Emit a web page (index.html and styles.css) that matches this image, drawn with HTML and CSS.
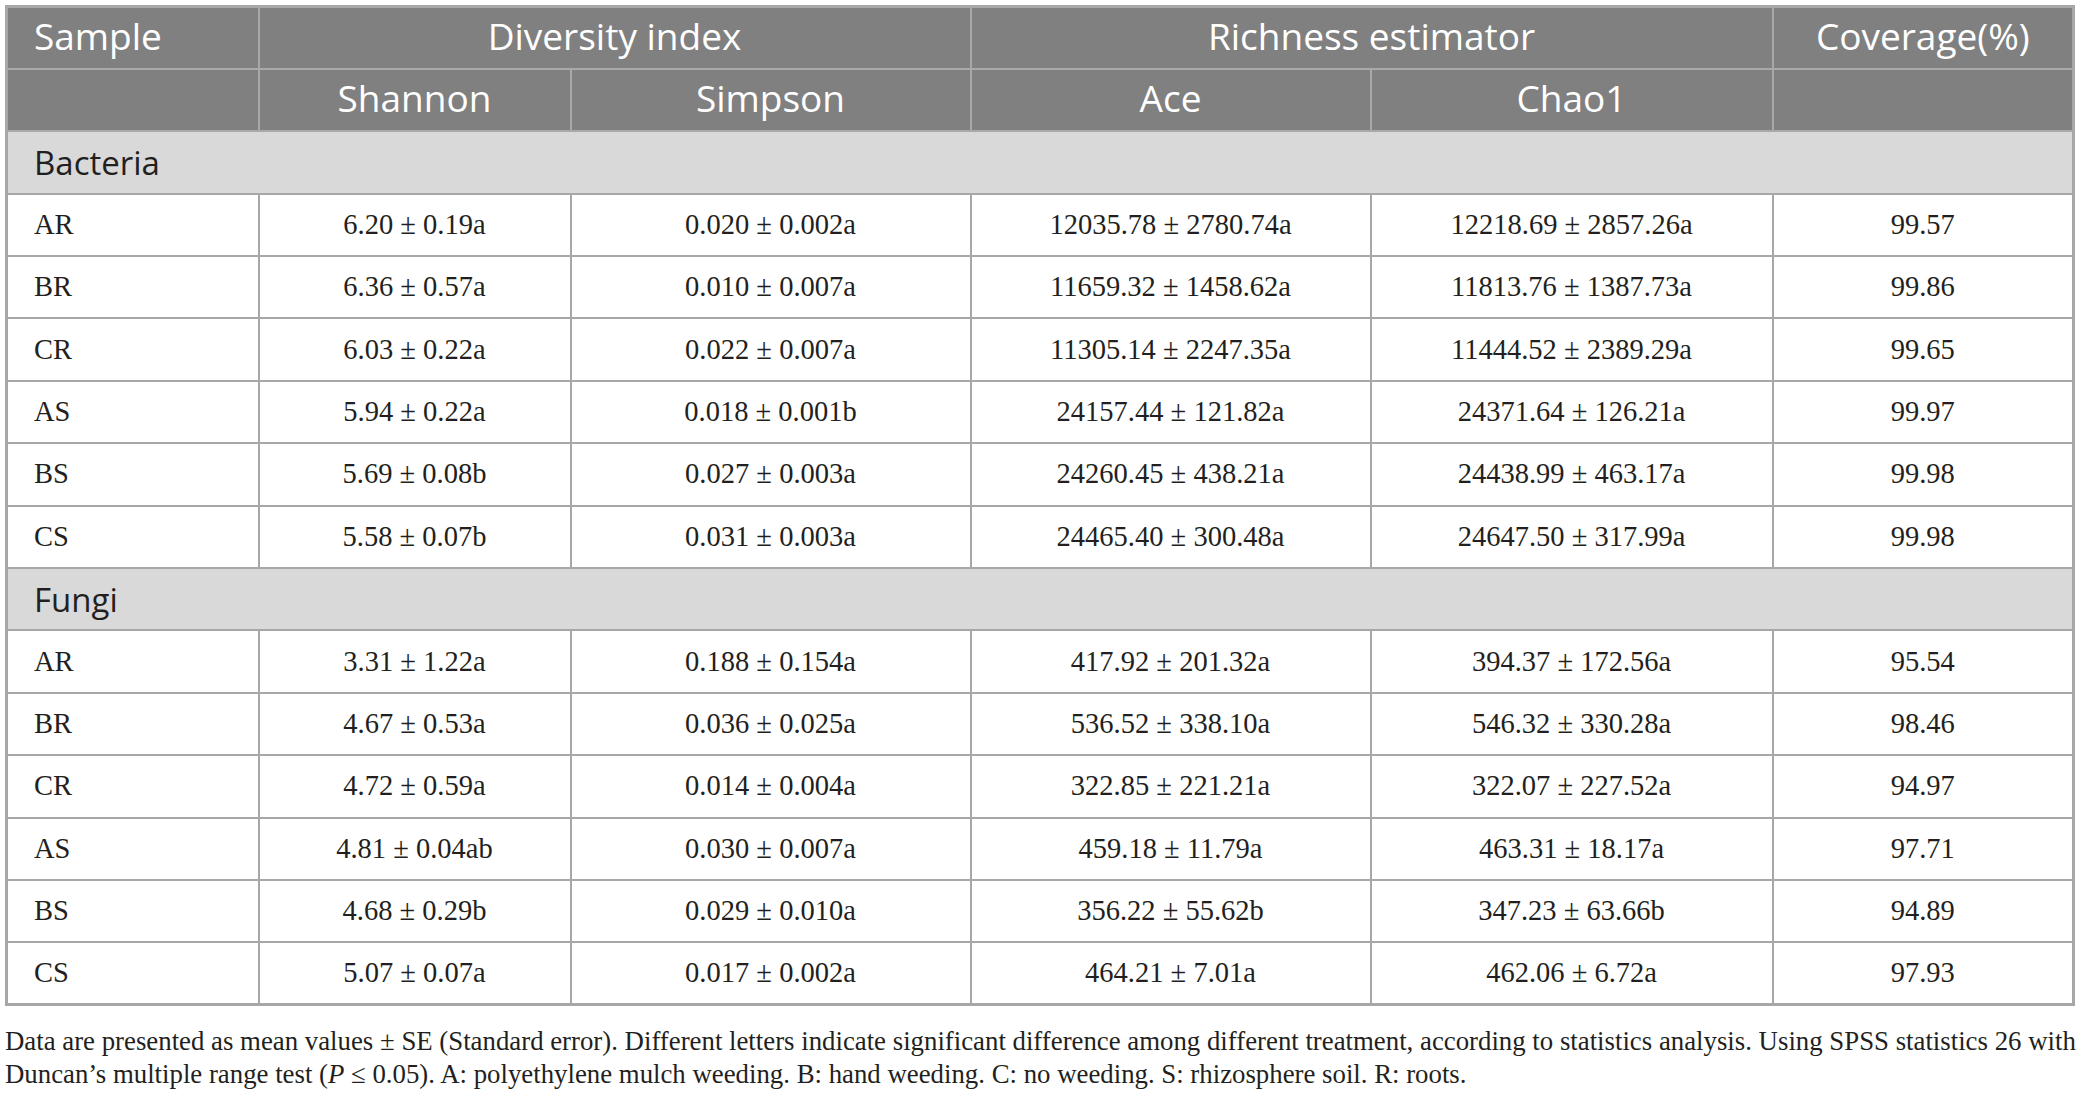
FILE: index.html
```html
<!DOCTYPE html>
<html lang="en">
<head>
    <meta charset="UTF-8">
    <title>Alpha diversity</title>
    <link rel="stylesheet" href="styles.css">
</head>
<body>
    <table class="data-table">
        <colgroup>
            <col class="c-sample">
            <col class="c-shannon">
            <col class="c-wide">
            <col class="c-wide">
            <col class="c-chao">
            <col class="c-cov">
        </colgroup>
        <thead>
            <tr>
                <th class="left">Sample</th>
                <th colspan="2">Diversity index</th>
                <th colspan="2">Richness estimator</th>
                <th>Coverage(%)</th>
            </tr>
            <tr>
                <th></th>
                <th>Shannon</th>
                <th>Simpson</th>
                <th>Ace</th>
                <th>Chao1</th>
                <th></th>
            </tr>
        </thead>
        <tbody>
            <tr class="group"><td colspan="6">Bacteria</td></tr>
            <tr><td>AR</td><td>6.20 ± 0.19a</td><td>0.020 ± 0.002a</td><td>12035.78 ± 2780.74a</td><td>12218.69 ± 2857.26a</td><td>99.57</td></tr>
            <tr><td>BR</td><td>6.36 ± 0.57a</td><td>0.010 ± 0.007a</td><td>11659.32 ± 1458.62a</td><td>11813.76 ± 1387.73a</td><td>99.86</td></tr>
            <tr><td>CR</td><td>6.03 ± 0.22a</td><td>0.022 ± 0.007a</td><td>11305.14 ± 2247.35a</td><td>11444.52 ± 2389.29a</td><td>99.65</td></tr>
            <tr><td>AS</td><td>5.94 ± 0.22a</td><td>0.018 ± 0.001b</td><td>24157.44 ± 121.82a</td><td>24371.64 ± 126.21a</td><td>99.97</td></tr>
            <tr><td>BS</td><td>5.69 ± 0.08b</td><td>0.027 ± 0.003a</td><td>24260.45 ± 438.21a</td><td>24438.99 ± 463.17a</td><td>99.98</td></tr>
            <tr><td>CS</td><td>5.58 ± 0.07b</td><td>0.031 ± 0.003a</td><td>24465.40 ± 300.48a</td><td>24647.50 ± 317.99a</td><td>99.98</td></tr>
            <tr class="group"><td colspan="6">Fungi</td></tr>
            <tr><td>AR</td><td>3.31 ± 1.22a</td><td>0.188 ± 0.154a</td><td>417.92 ± 201.32a</td><td>394.37 ± 172.56a</td><td>95.54</td></tr>
            <tr><td>BR</td><td>4.67 ± 0.53a</td><td>0.036 ± 0.025a</td><td>536.52 ± 338.10a</td><td>546.32 ± 330.28a</td><td>98.46</td></tr>
            <tr><td>CR</td><td>4.72 ± 0.59a</td><td>0.014 ± 0.004a</td><td>322.85 ± 221.21a</td><td>322.07 ± 227.52a</td><td>94.97</td></tr>
            <tr><td>AS</td><td>4.81 ± 0.04ab</td><td>0.030 ± 0.007a</td><td>459.18 ± 11.79a</td><td>463.31 ± 18.17a</td><td>97.71</td></tr>
            <tr><td>BS</td><td>4.68 ± 0.29b</td><td>0.029 ± 0.010a</td><td>356.22 ± 55.62b</td><td>347.23 ± 63.66b</td><td>94.89</td></tr>
            <tr><td>CS</td><td>5.07 ± 0.07a</td><td>0.017 ± 0.002a</td><td>464.21 ± 7.01a</td><td>462.06 ± 6.72a</td><td>97.93</td></tr>
        </tbody>
    </table>

    <p class="note">
        Data are presented as mean values ± SE (Standard error). Different letters indicate significant difference among different treatment, according to statistics analysis. Using SPSS statistics 26 with<br>
        Duncan’s multiple range test (<i>P</i> ≤ 0.05). A: polyethylene mulch weeding. B: hand weeding. C: no weeding. S: rhizosphere soil. R: roots.
    </p>
</body>
</html>
```

FILE: styles.css
```css
body {
    margin: 0;
    padding: 5px 6px 0 5px;
    background: #fff;
    color: #231f20;
    font-family: "Liberation Serif", "Times New Roman", serif;
}
.data-table {
    border-collapse: collapse;
    table-layout: fixed;
    width: 2067px;
    border: 3px solid #a7a7a7;
}
.c-sample { width: 252px; }
.c-shannon { width: 312px; }
.c-wide { width: 400px; }
.c-chao { width: 402px; }
.c-cov { width: 301px; }

.data-table tr {
    height: 62.4px;
}
.data-table th,
.data-table td {
    border: 2px solid #a7a7a7;
    padding: 0 10px;
    text-align: center;
    vertical-align: middle;
    white-space: nowrap;
}
.data-table th {
    background-color: #808080;
    color: #fff;
    font-family: "Open Sans", "Noto Sans", sans-serif;
    font-weight: 400;
    font-size: 37px;
    line-height: 1.1;
    padding-bottom: 4px;
    border-color: #a9a9a9;
}
.data-table th.left {
    text-align: left;
    padding-left: 26px;
}
.data-table td {
    font-size: 28.5px;
}
.data-table td:first-child {
    text-align: left;
    padding-left: 26px;
}
.data-table .group td {
    background-color: #d9d9d9;
    font-family: "Open Sans", "Noto Sans", sans-serif;
    font-size: 33px;
    color: #231f20;
}
.note {
    margin: 19px 0 0;
    font-size: 26.8px;
    line-height: 33px;
    white-space: nowrap;
}
```
